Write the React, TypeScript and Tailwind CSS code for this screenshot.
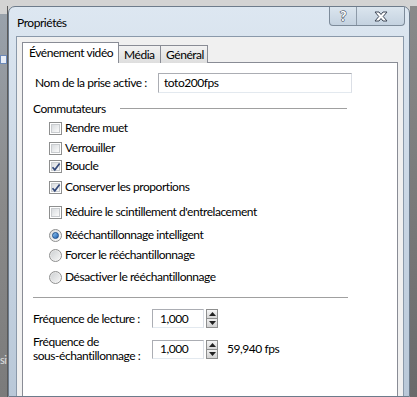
import type { ReactNode } from 'react'

const font = "font-['Lato','Noto_Sans',sans-serif] tracking-[-0.45px]"

function CheckBox({ checked }: { checked?: boolean }) {
  return (
    <span className="relative flex h-[13px] w-[13px] shrink-0 items-center justify-center border border-[#8e8f8f] bg-white">
      <span className="h-[9px] w-[9px] border border-[#c9cccf] bg-gradient-to-br from-[#d9dcdf] to-[#fbfbfb]" />
      {checked && (
        <svg className="absolute left-[1px] top-[1px]" width="10" height="10" viewBox="0 0 10 10">
          <path d="M1.5 5.2 L3.8 7.8 L8.6 1.6" fill="none" stroke="#34497a" strokeWidth="1.7" />
        </svg>
      )}
    </span>
  )
}

function Radio({ checked }: { checked?: boolean }) {
  return (
    <span className="flex h-[13px] w-[13px] shrink-0 items-center justify-center rounded-full border border-[#8e8f8f] bg-gradient-to-br from-[#dedede] to-[#fafafa]">
      {checked ? (
        <span className="h-[7px] w-[7px] rounded-full border border-[#1d4f8c] bg-gradient-to-br from-[#8fc6f2] to-[#1f5fae]" />
      ) : (
        <span className="h-[9px] w-[9px] rounded-full bg-gradient-to-br from-[#cfd2d4] to-[#f4f4f4]" />
      )}
    </span>
  )
}

function Option({ children, mt, radio, checked }: { children: ReactNode; mt: string; radio?: boolean; checked?: boolean }) {
  return (
    <div className={`flex h-[16px] items-center gap-[2px] pl-[16px] ${mt}`}>
      {radio ? <Radio checked={checked} /> : <CheckBox checked={checked} />}
      <span className="whitespace-nowrap pl-[1px] leading-none">{children}</span>
    </div>
  )
}

function Spin({ value }: { value: string }) {
  return (
    <div className="flex items-center gap-[2px]">
      <div className="flex h-[19px] w-[52px] items-center border border-[#abadb3] border-r-[#dbdfe6] border-b-[#e3e9ef] pl-[7px]">
        {value}
      </div>
      <div className="flex h-[19px] w-[12px] flex-col">
        <div className="flex flex-1 items-center justify-center border border-[#8e8f8f] bg-gradient-to-b from-[#f6f6f6] to-[#d6d6d6]">
          <svg width="7" height="4" viewBox="0 0 7 4"><path d="M0 4 L3.5 0 L7 4 Z" fill="#222" /></svg>
        </div>
        <div className="flex flex-1 items-center justify-center border border-t-0 border-[#8e8f8f] bg-gradient-to-b from-[#eeeeee] to-[#d2d2d2]">
          <svg width="7" height="4" viewBox="0 0 7 4"><path d="M0 0 L7 0 L3.5 4 Z" fill="#222" /></svg>
        </div>
      </div>
    </div>
  )
}

export default function App() {
  return (
    <div className={`flex h-[397px] w-[417px] flex-col overflow-hidden bg-[#d3d3d3] text-[12px] text-black ${font}`}>
      <div className="h-[6px] shrink-0" />
      <div className="flex flex-1">
        {/* app behind the dialog */}
        <div className="flex w-[8px] shrink-0 flex-col border-r border-[#5a5a5a] bg-gradient-to-b from-[#9aa3ad] via-[#8a8a8a] to-[#7b7b7b]">
          <div className="h-[8px] bg-[#d3d3d3]" />
          <div className="mt-[41px] h-[9px] w-[7px] border border-[#6b89b8] bg-[#e8eef8]" />
          <div className="mt-[290px] overflow-hidden whitespace-nowrap text-right text-[11px] leading-none text-[#e0e0e0]">sif</div>
        </div>

        {/* dialog */}
        <div className="flex flex-1 flex-col rounded-t-[7px] border border-[#6d7b8b] bg-gradient-to-b from-[#dde7f1] via-[#c9d6e4] to-[#b9c8d8] pl-[7px] pr-[5px]">
          <div className="flex h-[29px] shrink-0 items-start">
            <div className="pl-[1px] pt-[7px] text-[12px]">Propriétés</div>
            <div className="ml-auto mr-[-1px] flex h-[19px] overflow-hidden rounded-b-[4px] border border-t-0 border-[#7d8b9a] bg-gradient-to-b from-[#dbe5ee] to-[#c4d2e0]">
              <div className="flex w-[27px] items-center justify-center border-r border-[#8d9aa8] text-[14px] font-bold leading-none text-white [-webkit-text-stroke:1.2px_#3d4756] [paint-order:stroke_fill]">
                ?
              </div>
              <div className="flex w-[47px] items-center justify-center">
                <svg width="14" height="11" viewBox="0 0 14 11">
                  <path d="M1 1 H5 L7 3.5 L9 1 H13 L9.2 5.5 L13 10 H9 L7 7.5 L5 10 H1 L4.8 5.5 Z" fill="#fff" stroke="#3d4756" strokeWidth="1" strokeLinejoin="round" />
                </svg>
              </div>
            </div>
          </div>

          <div className="flex flex-1 flex-col border border-b-0 border-[#8a99aa] bg-[#f0f0f0] pl-[5px] pr-[5px] pt-[5px]">
            {/* tabs */}
            <div className="relative z-10 -mb-px flex h-[21px] shrink-0 items-end whitespace-nowrap">
              <div className="flex h-[21px] w-[97px] items-center border border-b-0 border-[#898c95] bg-white pb-[1px] pl-[6px]">
                Événement vidéo
              </div>
              <div className="flex h-[18px] w-[42px] items-center border border-b-0 border-l-0 border-[#898c95] bg-gradient-to-b from-[#f2f2f2] to-[#dedede] pl-[5px]">
                Média
              </div>
              <div className="flex h-[18px] w-[47px] items-center border border-b-0 border-l-0 border-[#898c95] bg-gradient-to-b from-[#f2f2f2] to-[#dedede] pl-[5px]">
                Général
              </div>
            </div>

            {/* panel */}
            <div className="flex flex-1 flex-col whitespace-nowrap border border-b-0 border-[#898c95] bg-white pl-[10px] pt-[10px]">
              <div className="flex h-[20px] items-center pl-[2px]">
                <span className="w-[123px]">Nom de la prise active :</span>
                <div className="flex h-[20px] w-[194px] items-center border border-[#abadb3] border-r-[#dbdfe6] border-b-[#e3e9ef] pl-[5px]">
                  toto200fps
                </div>
              </div>

              <div className="mt-[9px] flex h-[14px] w-[314px] items-center">
                <span className="leading-none">Commutateurs</span>
                <div className="ml-[14px] flex-1 border-b border-t border-b-white border-t-[#a0a0a0]" />
              </div>

              <Option mt="mt-[4px]">Rendre muet</Option>
              <Option mt="mt-[4px]">Verrouiller</Option>
              <Option mt="mt-[2px]" checked>Boucle</Option>
              <Option mt="mt-[5px]" checked>Conserver les proportions</Option>
              <Option mt="mt-[9px]">Réduire le scintillement d'entrelacement</Option>
              <Option mt="mt-[7px]" radio checked>Rééchantillonnage intelligent</Option>
              <Option mt="mt-[4px]" radio>Forcer le rééchantillonnage</Option>
              <Option mt="mt-[6px]" radio>Désactiver le rééchantillonnage</Option>

              <div className="mt-[12px] w-[315px] border-b border-t border-b-white border-t-[#a0a0a0]" />

              <div className="mt-[10px] flex items-center">
                <span className="w-[119px]">Fréquence de lecture :</span>
                <Spin value="1,000" />
              </div>
              <div className="mt-[7px] flex items-center">
                <div className="flex w-[119px] flex-col leading-[14px]">
                  <span>Fréquence de</span>
                  <span>sous-échantillonnage :</span>
                </div>
                <Spin value="1,000" />
                <span className="ml-[9px]">59,940 fps</span>
              </div>
            </div>
          </div>
        </div>

        <div className="w-[7px] shrink-0 bg-gradient-to-b from-[#8a8a8a] to-[#6a6a6a]" />
      </div>
    </div>
  )
}
